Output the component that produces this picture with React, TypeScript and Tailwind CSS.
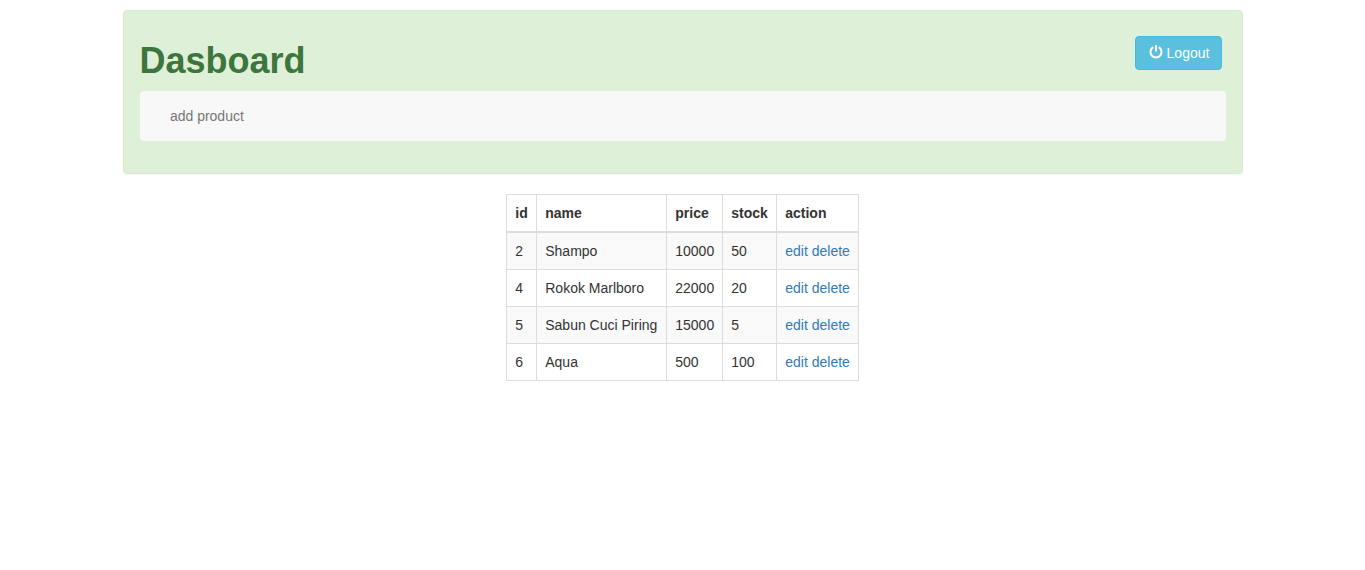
import React from "react";

const rows = [
  { id: 2, name: "Shampo", price: 10000, stock: 50 },
  { id: 4, name: "Rokok Marlboro", price: 22000, stock: 20 },
  { id: 5, name: "Sabun Cuci Piring", price: 15000, stock: 5 },
  { id: 6, name: "Aqua", price: 500, stock: 100 },
];

const th = "border border-[#ddd] border-b-2 py-2 pr-2 pl-[8.25px] text-left font-bold align-bottom";
const td = "border border-[#ddd] py-2 pr-2 pl-[8.25px] align-top";

function PowerIcon() {
  return (
    <svg width="14" height="14" viewBox="0 0 14 14" fill="none" stroke="currentColor" strokeWidth="2" className="mr-1 -mt-[2px]">
      <path d="M4.3 2.2A5.5 5.5 0 1 0 9.7 2.2" />
      <path d="M7 0V6.5" />
    </svg>
  );
}

export default function App() {
  return (
    <div className="min-h-[570px] bg-white text-[14px] leading-[20px] text-[#333] font-['Liberation_Sans',Arial,sans-serif]">
      <div className="pt-[10px]">
        <div className="mx-auto h-[164px] w-[1120px] rounded border border-[#d9ebcc] bg-[#dff0d8] pt-[25px] pr-[16px] pl-[16px] shadow-[0_1px_2px_rgba(0,0,0,0.05)]">
          <div className="flex items-start justify-between pr-[4px]">
            <h1 className="mt-[5px] mb-[10px] text-[36px] leading-[39.6px] font-bold text-[#3c763d]">Dasboard</h1>
            <button className="flex h-[34px] w-[87px] items-center justify-center rounded border border-[#46b8da] bg-[#5bc0de] pl-[2px] text-white">
              <PowerIcon />
              Logout
            </button>
          </div>
          <nav className="h-[50px] rounded bg-[#f8f8f8] pl-[30.4px] leading-[50px] text-[#777]">
            <a href="#">add product</a>
          </nav>
        </div>
        <table className="mx-auto mt-[20px] w-[353px] table-fixed border-collapse bg-white">
          <colgroup>
            <col className="w-[30px]" />
            <col className="w-[130px]" />
            <col className="w-[56px]" />
            <col className="w-[54px]" />
            <col className="w-[82px]" />
          </colgroup>
          <thead>
            <tr>
              <th className={th}>id</th>
              <th className={th}>name</th>
              <th className={th}>price</th>
              <th className={th}>stock</th>
              <th className={th}>action</th>
            </tr>
          </thead>
          <tbody>
            {rows.map((r, i) => (
              <tr key={r.id} className={i % 2 === 0 ? "bg-[#f9f9f9]" : ""}>
                <td className={td}>{r.id}</td>
                <td className={td}>{r.name}</td>
                <td className={td}>{r.price}</td>
                <td className={td}>{r.stock}</td>
                <td className={`${td} whitespace-nowrap`}>
                  <a href="#" className="text-[#337ab7]">edit</a>{" "}
                  <a href="#" className="text-[#337ab7]">delete</a>
                </td>
              </tr>
            ))}
          </tbody>
        </table>
      </div>
    </div>
  );
}
